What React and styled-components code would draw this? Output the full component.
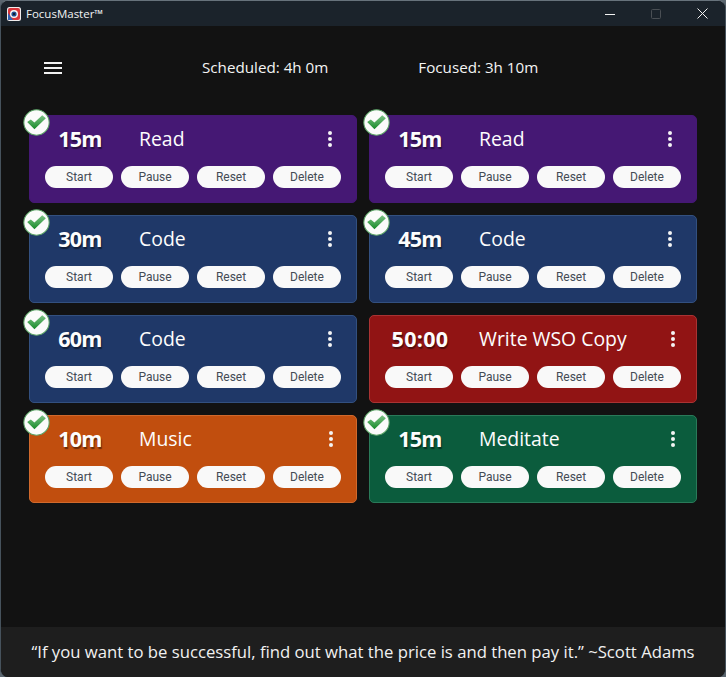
import React from 'react';
import styled, { createGlobalStyle } from 'styled-components';

const GlobalStyle = createGlobalStyle`
  html, body {
    margin: 0;
    padding: 0;
    height: 100%;
    background: #5b666f;
  }
  #root {
    height: 100%;
  }
`;

const Window = styled.div`
  width: 726px;
  height: 677px;
  box-sizing: border-box;
  display: flex;
  flex-direction: column;
  overflow: hidden;
  background: #121212;
  border-top: 1px solid #67727b;
  border-left: 1px solid #46525c;
  border-right: 1px solid #46525c;
  border-radius: 8px;
  font-family: 'Open Sans', sans-serif;
`;

const TitleBar = styled.div`
  height: 25px;
  flex-shrink: 0;
  display: flex;
  align-items: center;
  padding-left: 6px;
  background: #1b232b;
  color: #f2f3f4;
  font-size: 11.5px;
`;

const AppName = styled.span`
  margin-left: 5px;
  flex: 1;
`;

const WinButton = styled.div`
  width: 46px;
  height: 25px;
  display: flex;
  align-items: center;
  justify-content: center;
`;

const Main = styled.div`
  flex: 1;
  display: flex;
  flex-direction: column;
`;

const Header = styled.div`
  height: 89px;
  display: flex;
  align-items: center;
  padding: 0 0 8px 43px;
  box-sizing: border-box;
  color: #f4f4f4;
  font-size: 15.2px;
`;

const Burger = styled.div`
  width: 18px;
  height: 12px;
  margin: 2px 140px 0 0;
  display: flex;
  flex-direction: column;
  justify-content: space-between;
  span {
    height: 2px;
    background: #f1f1f1;
  }
`;

const Stat = styled.div`
  margin-right: 90px;
  white-space: nowrap;
`;

const Board = styled.div`
  display: grid;
  grid-template-columns: 328px 328px;
  grid-auto-rows: 88px;
  gap: 12px;
  padding-left: 28px;
`;

const Card = styled.div`
  position: relative;
  box-sizing: border-box;
  padding: 0 15px;
  display: flex;
  flex-direction: column;
  background: ${p => p.$bg};
  border: 1px solid ${p => p.$edge};
  border-radius: 5px;
`;

const Badge = styled.svg`
  position: absolute;
  left: -7px;
  top: -7px;
  width: 27px;
  height: 27px;
`;

const TopRow = styled.div`
  height: 44px;
  margin-bottom: 6px;
  display: flex;
  align-items: center;
  color: #fdfdfd;
`;

const Time = styled.div`
  width: 72px;
  margin: 0 23px 0 -1px;
  text-align: center;
  font-size: 21.5px;
  font-weight: 700;
  letter-spacing: ${p => p.$wide ? '0.3px' : '-0.7px'};
  text-shadow: 1px 2px 1px rgba(0, 0, 0, 0.45);
`;

const TaskTitle = styled.div`
  flex: 1;
  font-size: 19.4px;
`;

const Kebab = styled.div`
  margin: 2px ${p => p.$right}px 0 0;
  display: flex;
  flex-direction: column;
  gap: 2px;
  span {
    width: 4px;
    height: 4px;
    border-radius: 50%;
    background: #f4f4f4;
  }
`;

const Buttons = styled.div`
  display: flex;
  gap: 8px;
`;

const PillButton = styled.div`
  width: 68px;
  height: 22px;
  display: flex;
  align-items: center;
  justify-content: center;
  background: #f9f9f9;
  border-radius: 11px;
  color: #444b55;
  font-family: Roboto, sans-serif;
  font-size: 12px;
`;

const Quote = styled.div`
  height: 50px;
  flex-shrink: 0;
  padding-bottom: 2px;
  box-sizing: border-box;
  display: flex;
  align-items: center;
  justify-content: center;
  background: #1e1e1e;
  color: #f1f1f1;
  font-size: 16.7px;
  white-space: nowrap;
`;

const tones = {
  purple: { bg: '#451874', edge: '#451874' },
  blue: { bg: '#1f3868', edge: '#33507f' },
  red: { bg: '#911414', edge: '#a93333' },
  orange: { bg: '#c14e0e', edge: '#d0692c' },
  green: { bg: '#0b5c3d', edge: '#2a7a59' },
};

const tasks = [
  { time: '15m', title: 'Read', tone: 'purple', check: true, right: 9 },
  { time: '15m', title: 'Read', tone: 'purple', check: true, right: 9 },
  { time: '30m', title: 'Code', tone: 'blue', check: true, right: 9 },
  { time: '45m', title: 'Code', tone: 'blue', check: true, right: 9 },
  { time: '60m', title: 'Code', tone: 'blue', check: true, right: 9 },
  { time: '50:00', title: 'Write WSO Copy', tone: 'red', right: 6 },
  { time: '10m', title: 'Music', tone: 'orange', check: true, right: 8 },
  { time: '15m', title: 'Meditate', tone: 'green', check: true, right: 6 },
];

const CheckBadge = () => (
  <Badge viewBox="0 0 26 26">
    <defs>
      <linearGradient id="tick" x1="0" y1="0" x2="0" y2="1">
        <stop offset="0" stopColor="#7cc285" />
        <stop offset="1" stopColor="#178a2a" />
      </linearGradient>
    </defs>
    <circle cx="13" cy="13" r="12.2" fill="#fbfbfb" stroke="#5aa364" strokeWidth="1" />
    <path d="M4 12.5 L7.5 10 L11 13 L18.5 6 L22 9 L11 19.5 Z" fill="url(#tick)" />
  </Badge>
);

const TaskCard = ({ task }) => (
  <Card $bg={tones[task.tone].bg} $edge={tones[task.tone].edge}>
    {task.check && <CheckBadge />}
    <TopRow>
      <Time $wide={task.time.length > 3}>{task.time}</Time>
      <TaskTitle>{task.title}</TaskTitle>
      <Kebab $right={task.right}>
        <span />
        <span />
        <span />
      </Kebab>
    </TopRow>
    <Buttons>
      {['Start', 'Pause', 'Reset', 'Delete'].map(label => (
        <PillButton key={label}>{label}</PillButton>
      ))}
    </Buttons>
  </Card>
);

export default function App() {
  return (
    <Window>
      <GlobalStyle />
      <TitleBar>
        <svg width="14" height="14" viewBox="0 0 14 14">
          <rect width="14" height="14" rx="2.5" fill="#f1eded" />
          <rect x="1" y="1" width="12" height="12" rx="2" fill="#d8343a" />
          <path d="M1 13 V6 L6 13 Z" fill="#2f5fb0" />
          <circle cx="7" cy="7" r="4" fill="#f7f7f7" />
          <circle cx="7" cy="7" r="2.6" fill="#1d4d92" />
          <circle cx="7" cy="7" r="1" fill="#111" />
        </svg>
        <AppName>FocusMaster™</AppName>
        <WinButton>
          <svg width="10" height="10" viewBox="0 0 10 10">
            <path d="M0 5.5 H10" stroke="#f2f2f2" strokeWidth="1" />
          </svg>
        </WinButton>
        <WinButton>
          <svg width="10" height="10" viewBox="0 0 10 10">
            <rect x="0.5" y="0.5" width="9" height="9" rx="1" fill="none" stroke="#4a4f54" />
          </svg>
        </WinButton>
        <WinButton>
          <svg width="11" height="11" viewBox="0 0 11 11">
            <path d="M0.5 0.5 L10.5 10.5 M10.5 0.5 L0.5 10.5" stroke="#f2f2f2" strokeWidth="1" />
          </svg>
        </WinButton>
      </TitleBar>
      <Main>
        <Header>
          <Burger>
            <span />
            <span />
            <span />
          </Burger>
          <Stat>Scheduled: 4h 0m</Stat>
          <Stat>Focused: 3h 10m</Stat>
        </Header>
        <Board>
          {tasks.map((task, i) => (
            <TaskCard key={i} task={task} />
          ))}
        </Board>
      </Main>
      <Quote>“If you want to be successful, find out what the price is and then pay it.” ~Scott Adams</Quote>
    </Window>
  );
}
